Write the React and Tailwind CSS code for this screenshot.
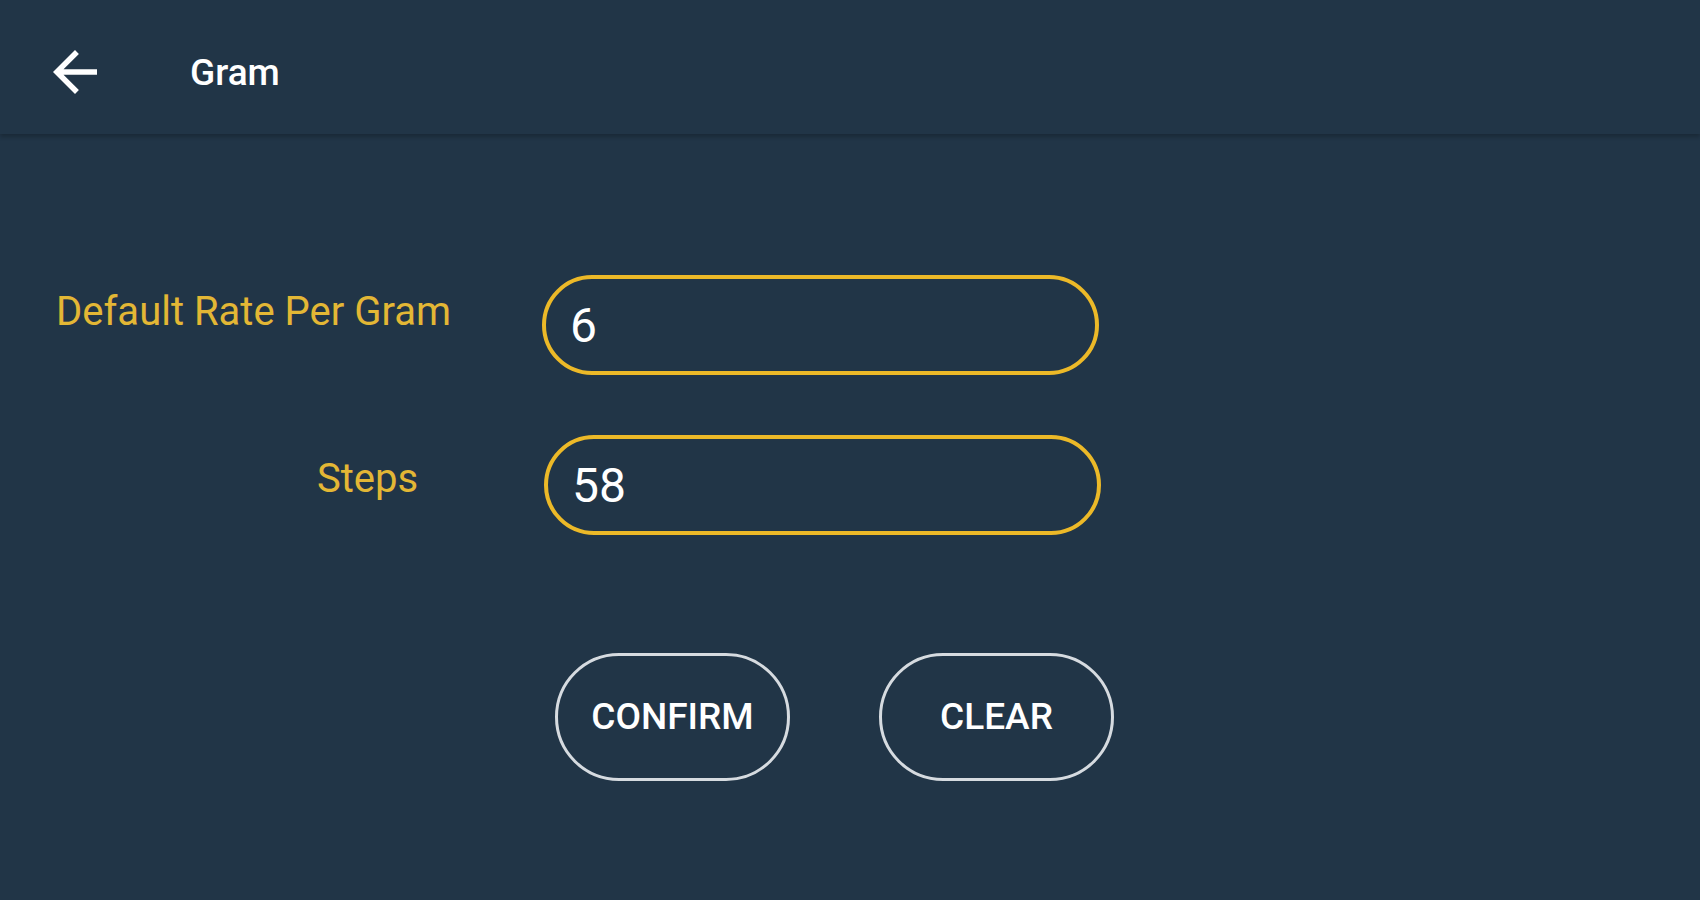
import { useState } from 'react';

function BackArrow() {
  return (
    <svg width="66" height="66" viewBox="0 0 24 24" fill="#ffffff">
      <path d="M20 11H7.83l5.59-5.59L12 4l-8 8 8 8 1.41-1.41L7.83 13H20v-2z" />
    </svg>
  );
}

export default function App() {
  const [rate, setRate] = useState('6');
  const [steps, setSteps] = useState('58');

  return (
    <div className="min-h-screen w-full bg-[#213547] font-['Roboto',sans-serif]">
      <header className="relative z-10 flex h-[134px] items-center bg-[#213547] shadow-[0_3px_4px_rgba(0,0,0,0.22)]">
        <button className="ml-[42px] mt-[10px] flex items-center">
          <BackArrow />
        </button>
        <h1 className="ml-[82px] mt-[12px] text-[37px] font-medium text-white">Gram</h1>
      </header>

      <main className="pt-[141px]">
        {/* settings rows */}
        <div className="flex flex-col gap-[60px]">
          <div className="flex items-center">
            <label className="mb-[26px] w-[542px] pl-[56px] text-[40px] text-[#e3b735]">
              Default Rate Per Gram
            </label>
            <input
              value={rate}
              onChange={(e) => setRate(e.target.value)}
              className="h-[100px] w-[557px] rounded-full border-4 border-[#ecb928] bg-transparent px-[24px] text-[48px] text-white outline-none"
            />
          </div>
          <div className="flex items-center">
            <label className="mb-[12px] w-[544px] pl-[317px] text-[40px] text-[#e3b735]">
              Steps
            </label>
            <input
              value={steps}
              onChange={(e) => setSteps(e.target.value)}
              className="h-[100px] w-[557px] rounded-full border-4 border-[#ecb928] bg-transparent px-[24px] text-[48px] text-white outline-none"
            />
          </div>
        </div>

        <div className="mt-[118px] flex gap-[89px] pl-[555px]">
          <button className="h-[128px] w-[235px] rounded-full border-[3px] border-[#d6dbe0] text-[37px] font-medium text-white">
            CONFIRM
          </button>
          <button className="h-[128px] w-[235px] rounded-full border-[3px] border-[#d6dbe0] text-[37px] font-medium text-white">
            CLEAR
          </button>
        </div>
      </main>
    </div>
  );
}
